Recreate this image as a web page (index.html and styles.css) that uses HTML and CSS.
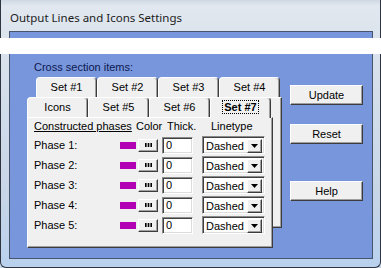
FILE: index.html
```html
<!DOCTYPE html>
<html>
<head>
<meta charset="utf-8">
<link rel="stylesheet" href="styles.css">
</head>
<body>
<div class="window">
  <div class="titlebar"><span class="title">Output Lines and Icons Settings</span></div>
  <div class="client">
    <div class="left">
      <div class="group-label">Cross section items:</div>
      <div class="tabstack">
        <div class="layer back">
          <div class="tabrow">
            <div class="tab">Set #1</div>
            <div class="tab">Set #2</div>
            <div class="tab">Set #3</div>
            <div class="tab">Set #4</div>
          </div>
          <div class="panel"></div>
        </div>
        <div class="layer front">
          <div class="tabrow">
            <div class="tab">Icons</div>
            <div class="tab">Set #5</div>
            <div class="tab">Set #6</div>
            <div class="tab active"><span class="focus">Set #7</span></div>
          </div>
          <div class="panel">
            <div class="head">
              <span class="h-phase">Constructed phases</span>
              <span class="h-color">Color</span>
              <span class="h-thick">Thick.</span>
              <span class="h-line">Linetype</span>
            </div>
            <div class="row">
              <span class="lbl">Phase 1:</span><span class="swatch"></span>
              <span class="dots"><svg width="7" height="4" viewBox="0 0 7 4"><rect x="0" y="0" width="1.6" height="4"/><rect x="2.7" y="0" width="1.6" height="4"/><rect x="5.4" y="0" width="1.6" height="4"/></svg></span>
              <span class="txt">0</span>
              <span class="combo"><span class="cval">Dashed</span><span class="drop"><svg width="7" height="4" viewBox="0 0 7 4"><path d="M0 0H7L3.5 4Z"/></svg></span></span>
            </div>
            <div class="row">
              <span class="lbl">Phase 2:</span><span class="swatch"></span>
              <span class="dots"><svg width="7" height="4" viewBox="0 0 7 4"><rect x="0" y="0" width="1.6" height="4"/><rect x="2.7" y="0" width="1.6" height="4"/><rect x="5.4" y="0" width="1.6" height="4"/></svg></span>
              <span class="txt">0</span>
              <span class="combo"><span class="cval">Dashed</span><span class="drop"><svg width="7" height="4" viewBox="0 0 7 4"><path d="M0 0H7L3.5 4Z"/></svg></span></span>
            </div>
            <div class="row">
              <span class="lbl">Phase 3:</span><span class="swatch"></span>
              <span class="dots"><svg width="7" height="4" viewBox="0 0 7 4"><rect x="0" y="0" width="1.6" height="4"/><rect x="2.7" y="0" width="1.6" height="4"/><rect x="5.4" y="0" width="1.6" height="4"/></svg></span>
              <span class="txt">0</span>
              <span class="combo"><span class="cval">Dashed</span><span class="drop"><svg width="7" height="4" viewBox="0 0 7 4"><path d="M0 0H7L3.5 4Z"/></svg></span></span>
            </div>
            <div class="row">
              <span class="lbl">Phase 4:</span><span class="swatch"></span>
              <span class="dots"><svg width="7" height="4" viewBox="0 0 7 4"><rect x="0" y="0" width="1.6" height="4"/><rect x="2.7" y="0" width="1.6" height="4"/><rect x="5.4" y="0" width="1.6" height="4"/></svg></span>
              <span class="txt">0</span>
              <span class="combo"><span class="cval">Dashed</span><span class="drop"><svg width="7" height="4" viewBox="0 0 7 4"><path d="M0 0H7L3.5 4Z"/></svg></span></span>
            </div>
            <div class="row">
              <span class="lbl">Phase 5:</span><span class="swatch"></span>
              <span class="dots"><svg width="7" height="4" viewBox="0 0 7 4"><rect x="0" y="0" width="1.6" height="4"/><rect x="2.7" y="0" width="1.6" height="4"/><rect x="5.4" y="0" width="1.6" height="4"/></svg></span>
              <span class="txt">0</span>
              <span class="combo"><span class="cval">Dashed</span><span class="drop"><svg width="7" height="4" viewBox="0 0 7 4"><path d="M0 0H7L3.5 4Z"/></svg></span></span>
            </div>
          </div>
        </div>
      </div>
    </div>
    <div class="buttons">
      <div class="btn b-update">Update</div>
      <div class="btn b-reset">Reset</div>
      <div class="btn b-help">Help</div>
    </div>
  </div>
</div>
<div class="glare"></div>
</body>
</html>
```

FILE: styles.css
```css
html, body {
  margin: 0;
  padding: 0;
  width: 381px;
  height: 268px;
  overflow: hidden;
}
body {
  position: relative;
  background: #c9d6e6;
  font-family: "Liberation Sans", Arial, sans-serif;
  font-size: 11px;
  color: #000;
}
.window {
  width: 381px;
  height: 268px;
  box-sizing: border-box;
  border: 1px solid #2e3440;
  border-top: none;
  border-radius: 0 0 6px 6px;
  background: linear-gradient(to bottom, #cfd8e3 0, #e2e8ef 6px, #dce4ed 31px, #c6d5e7 200px, #b9d1ee 100%);
  display: flex;
  flex-direction: column;
}
.titlebar {
  height: 31px;
  box-sizing: border-box;
  padding: 3px 0 0 9px;
  display: flex;
  align-items: center;
}
.title {
  font-family: "Noto Sans", "Open Sans", sans-serif;
  font-size: 11.5px;
  color: #1b1b1b;
}
.client {
  margin: 0 7px 0 8px;
  height: 228px;
  box-sizing: border-box;
  border: 1px solid #48536c;
  background: #7896db;
  display: flex;
}
.left {
  margin-left: 17px;
}
.group-label {
  margin-top: 29px;
  padding-left: 7px;
  height: 13px;
  line-height: 13px;
  color: #0c1650;
}
.tabstack {
  display: grid;
  margin-top: 3px;
}
.layer {
  grid-area: 1 / 1;
}
.back {
  margin-left: 9px;
}
.front {
  margin-top: 20px;
}
.tabrow {
  display: flex;
  height: 20px;
}
.tab {
  width: 61px;
  height: 20px;
  box-sizing: border-box;
  background: #f0f0f0;
  border-left: 1px solid #ffffff;
  border-top: 1px solid #ffffff;
  border-right: 1px solid #3c3c3c;
  box-shadow: inset -1px 0 0 #a0a0a0;
  border-radius: 4px 4px 0 0;
  text-align: center;
  line-height: 19px;
}
.tab.active {
  position: relative;
  height: 21px;
  margin-bottom: -1px;
  z-index: 1;
  font-weight: bold;
}
.focus {
  outline: 1px dotted #000;
  outline-offset: 0;
  padding: 0 1px;
}
.panel {
  width: 246px;
  height: 131px;
  box-sizing: border-box;
  background: #f0f0f0;
  border-left: 1px solid #ffffff;
  border-top: 1px solid #ffffff;
  border-right: 1px solid #3c3c3c;
  border-bottom: 1px solid #3c3c3c;
  box-shadow: inset -1px -1px 0 #a0a0a0;
  padding-left: 6px;
}
.head {
  display: grid;
  grid-template-columns: 102px 31px 44px auto;
  height: 17px;
  line-height: 17px;
  white-space: nowrap;
}
.h-phase { text-decoration: underline; }
.row {
  display: flex;
  align-items: center;
  height: 20px;
}
.lbl {
  width: 86px;
}
.swatch {
  width: 16px;
  height: 7px;
  background: #b200b4;
  margin-right: 2px;
}
.dots {
  width: 20px;
  height: 13px;
  box-sizing: border-box;
  background: #f0f0f0;
  border: 1px solid;
  border-color: #ffffff #3c3c3c #3c3c3c #ffffff;
  box-shadow: inset -1px -1px 0 #a0a0a0;
  display: flex;
  align-items: center;
  justify-content: center;
  margin-right: 4px;
}
.dots svg { display: block; fill: #000; }
.txt {
  width: 31px;
  height: 17px;
  box-sizing: border-box;
  background: #fff;
  border: 1px solid;
  border-color: #8a8a8a #ffffff #ffffff #8a8a8a;
  box-shadow: inset 1px 1px 0 #404040, inset -1px -1px 0 #dcdcdc;
  padding-left: 3px;
  line-height: 15px;
  margin-right: 9px;
}
.combo {
  width: 63px;
  height: 18px;
  box-sizing: border-box;
  background: #fff;
  border: 1px solid;
  border-color: #8a8a8a #ffffff #ffffff #8a8a8a;
  box-shadow: inset 1px 1px 0 #404040, inset -1px -1px 0 #dcdcdc;
  display: flex;
  padding: 2px 2px 1px 3px;
}
.cval {
  flex: 1;
  line-height: 14px;
}
.drop {
  width: 15px;
  height: 14px;
  box-sizing: border-box;
  background: #f0f0f0;
  border: 1px solid;
  border-color: #ffffff #3c3c3c #3c3c3c #ffffff;
  box-shadow: inset -1px -1px 0 #a0a0a0;
  display: flex;
  align-items: center;
  justify-content: center;
}
.drop svg { display: block; fill: #000; }
.buttons {
  margin-left: 8px;
  display: flex;
  flex-direction: column;
}
.btn {
  width: 73px;
  height: 20px;
  box-sizing: border-box;
  background: #f0f0f0;
  border: 1px solid;
  border-color: #ffffff #3c3c3c #3c3c3c #ffffff;
  box-shadow: inset -1px -1px 0 #a0a0a0;
  text-align: center;
  line-height: 18px;
}
.b-update { margin-top: 53px; }
.b-reset { margin-top: 19px; }
.b-help { margin-top: 37px; }
.glare {
  position: absolute;
  left: 0;
  top: 38px;
  width: 381px;
  height: 16px;
  background: #ffffff;
}
```
